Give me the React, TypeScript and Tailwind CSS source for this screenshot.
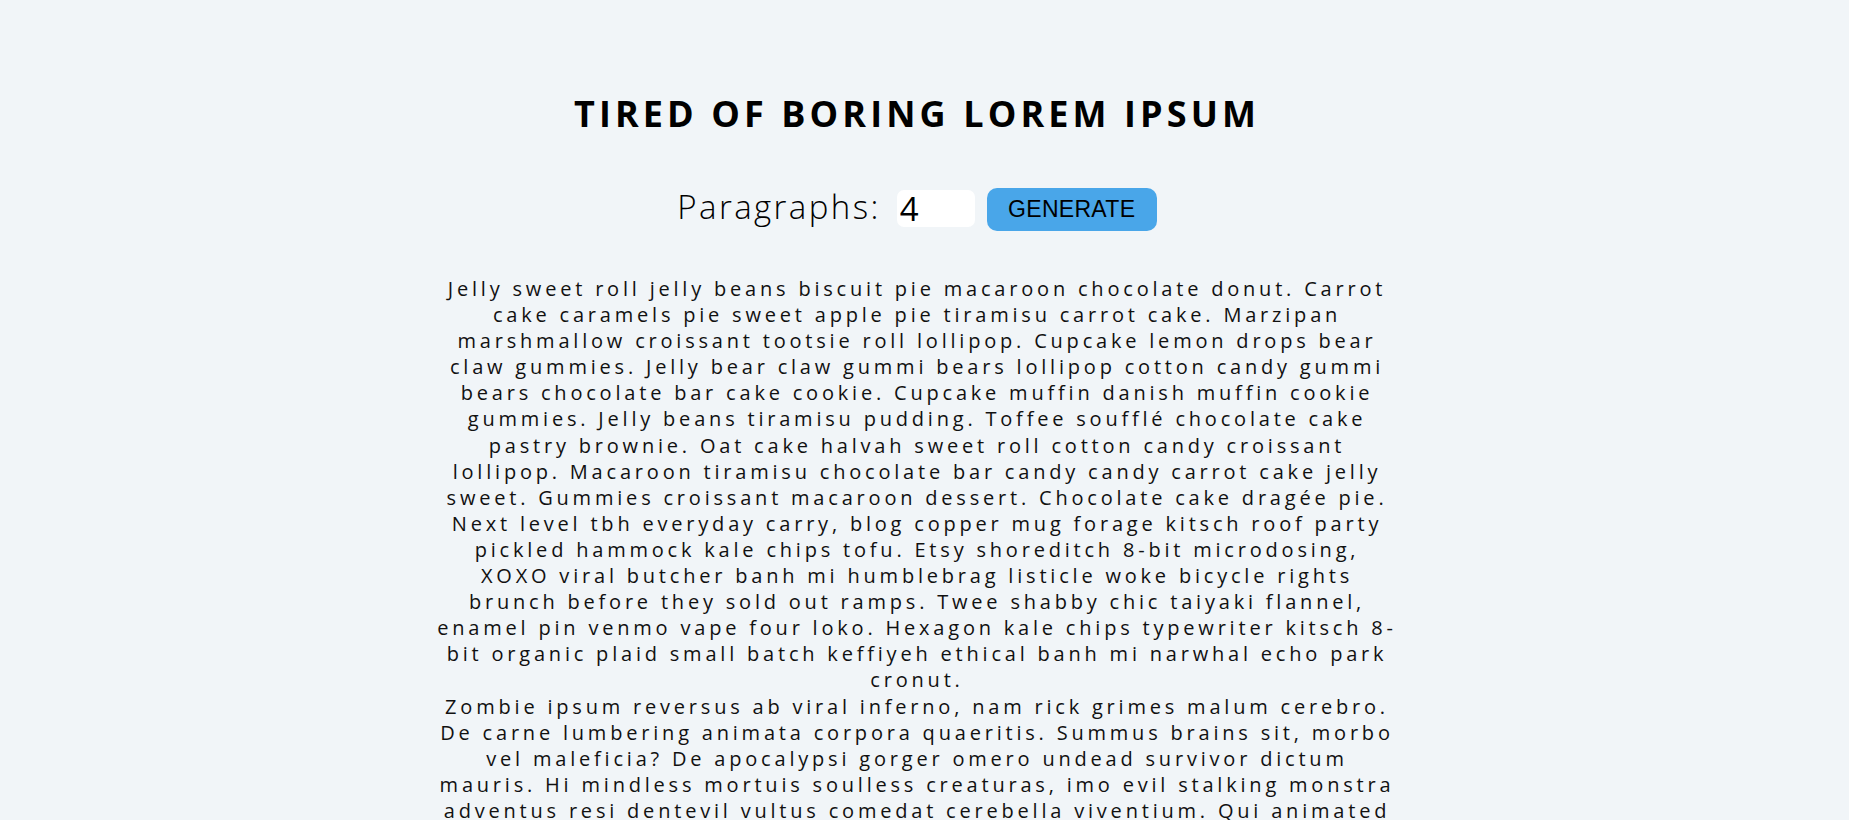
import React from "react";

const paragraphs = [
  "Jelly sweet roll jelly beans biscuit pie macaroon chocolate donut. Carrot cake caramels pie sweet apple pie tiramisu carrot cake. Marzipan marshmallow croissant tootsie roll lollipop. Cupcake lemon drops bear claw gummies. Jelly bear claw gummi bears lollipop cotton candy gummi bears chocolate bar cake cookie. Cupcake muffin danish muffin cookie gummies. Jelly beans tiramisu pudding. Toffee soufflé chocolate cake pastry brownie. Oat cake halvah sweet roll cotton candy croissant lollipop. Macaroon tiramisu chocolate bar candy candy carrot cake jelly sweet. Gummies croissant macaroon dessert. Chocolate cake dragée pie.",
  "Next level tbh everyday carry, blog copper mug forage kitsch roof party pickled hammock kale chips tofu. Etsy shoreditch 8-bit microdosing, XOXO viral butcher banh mi humblebrag listicle woke bicycle rights brunch before they sold out ramps. Twee shabby chic taiyaki flannel, enamel pin venmo vape four loko. Hexagon kale chips typewriter kitsch 8-bit organic plaid small batch keffiyeh ethical banh mi narwhal echo park cronut.",
  "Zombie ipsum reversus ab viral inferno, nam rick grimes malum cerebro. De carne lumbering animata corpora quaeritis. Summus brains sit, morbo vel maleficia? De apocalypsi gorger omero undead survivor dictum mauris. Hi mindless mortuis soulless creaturas, imo evil stalking monstra adventus resi dentevil vultus comedat cerebella viventium. Qui animated corpse, cricket bat max brucks terribilem incessu zomby. The voodoo sacerdos flesh eater, suscitat mortuos comedere carnem virus. Zonbi tattered for solum oculi eorum defunctis go lum cerebro. Nescio brains an Undead zombies. Sicut malus putrid voodoo horror. Nigh tofth eliv ingdead.",
  "Bacon ipsum dolor amet short ribs brisket venison rump drumstick pig sausage prosciutto chicken spare ribs salami picanha doner. Kevin capicola sausage, buffalo bresaola venison turkey shoulder picanha ham pork tri-tip meatball meatloaf ribeye. Doner spare ribs andouille bacon sausage. Ground round jerky brisket pastrami shank.",
];

export default function App() {
  return (
    <div className="min-h-screen bg-[#f1f5f8] pr-[15px] flex flex-col items-center pb-16 font-['Open_Sans',sans-serif] text-[#111]">
      <h1 className="mt-[91px] text-[36px] leading-[45px] font-bold uppercase tracking-[4.1px] text-black">
        Tired of boring lorem ipsum
      </h1>
      <form
        className="mt-[52px] flex items-center h-[43px]"
        onSubmit={(e) => e.preventDefault()}
      >
        <label
          htmlFor="amount"
          className="text-[33px] leading-[43px] font-light tracking-[2.4px] mb-[6px] text-black"
        >
          Paragraphs:
        </label>
        <input
          id="amount"
          type="number"
          defaultValue={4}
          className="ml-[16px] mb-[3px] h-[37px] w-[78px] rounded-[7px] bg-white pl-[3px] text-[33px] leading-[37px] text-black outline-none [appearance:textfield] [&::-webkit-inner-spin-button]:appearance-none"
        />
        <button
          type="submit"
          className="ml-[12px] h-[43px] w-[170px] rounded-[10px] bg-[#49a6e9] font-['Liberation_Sans',Arial,sans-serif] text-[23px] tracking-[0.3px] text-black uppercase"
        >
          Generate
        </button>
      </form>
      <div className="mt-[45px] w-[960px] text-center text-[20px] leading-[26.1px] tracking-[3.8px] text-[#111]">
        {paragraphs.map((p, i) => (
          <p key={i}>{p}</p>
        ))}
      </div>
    </div>
  );
}
